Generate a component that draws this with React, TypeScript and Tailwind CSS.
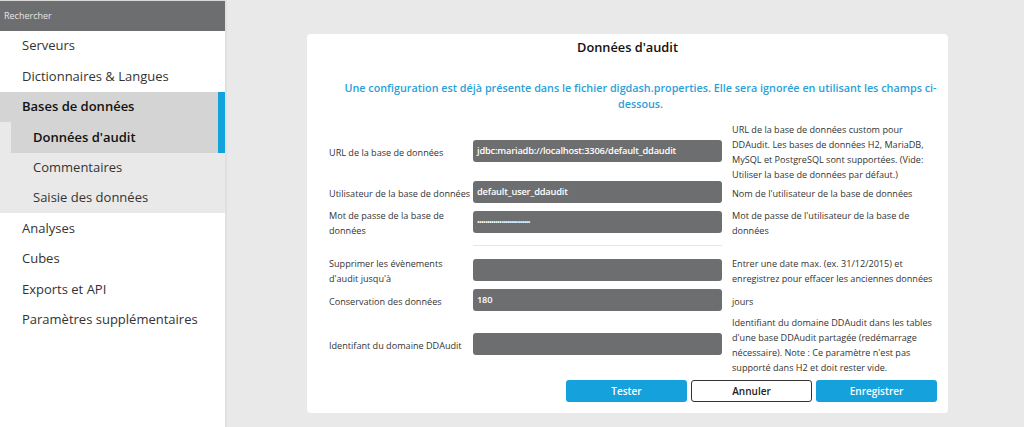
import React from "react";

const font = { fontFamily: '"Open Sans", "Noto Sans", sans-serif' };

function NavItem({ label }: { label: string }) {
  return <div className="flex h-[30.4px] items-center pl-[22px] text-[13px] text-[#333]">{label}</div>;
}

function Lines({ lines }: { lines: string[] }) {
  return (
    <>
      {lines.map((l, i) => (
        <div key={i} className="whitespace-nowrap">
          {l}
        </div>
      ))}
    </>
  );
}

function Row({ h, label, value, help, mt = 0, password = false }: { h: number; label: string[]; value?: string; help: string[]; mt?: number; password?: boolean }) {
  return (
    <div className="flex items-center" style={{ height: h, marginTop: mt }}>
      <div className="w-[144px] shrink-0 pt-[2px] text-[9.1px] leading-[15px] text-[#333]">
        <Lines lines={label} />
      </div>
      <div className="flex h-[22px] w-[249px] shrink-0 items-center rounded-[3px] bg-[#6d6e70] px-[4px] text-[9.3px] font-semibold tracking-[-0.2px] text-white">
        {password ? <span className="text-[7px] leading-none tracking-[-0.6px]">••••••••••••••••••••••••••</span> : value}
      </div>
      <div className="ml-[10px] shrink-0 pt-[2px] text-[9.1px] leading-[15px] text-[#333]">
        <Lines lines={help} />
      </div>
    </div>
  );
}

export default function App() {
  return (
    <div className="flex h-[427px] w-[1024px] overflow-hidden" style={font}>
      <div className="w-[225px] shrink-0 bg-white">
        <div className="flex h-[31px] items-center border-t border-[#d9d9d9] bg-[#6d6e70] pl-[4px] text-[9px] text-[#e6e6e6]">Rechercher</div>
        <NavItem label="Serveurs" />
        <NavItem label="Dictionnaires & Langues" />
        <div className="flex h-[30.4px] items-stretch">
          <div className="flex flex-1 items-center bg-[#d4d4d4] pl-[22px] text-[13px] font-semibold text-[#111]">Bases de données</div>
          <div className="w-[7px] bg-[#12a3dd]" />
        </div>
        <div className="bg-[#e9e9e9]">
          <div className="flex h-[30.4px] items-stretch">
            <div className="ml-[11px] flex flex-1 items-center bg-[#d4d4d4] pl-[22px] text-[13px] font-semibold text-[#111]">Données d'audit</div>
            <div className="w-[7px] bg-[#12a3dd]" />
          </div>
          <div className="flex h-[30.4px] items-center pl-[33px] text-[13px] text-[#333]">Commentaires</div>
          <div className="flex h-[30.4px] items-center pl-[33px] text-[13px] text-[#333]">Saisie des données</div>
        </div>
        <NavItem label="Analyses" />
        <NavItem label="Cubes" />
        <NavItem label="Exports et API" />
        <NavItem label="Paramètres supplémentaires" />
      </div>
      <div className="flex-1 border-l-2 border-[#e0e0e0] bg-[#e9e9e9] pt-[34px]">
        <div className="ml-[80px] flex h-[379px] w-[641px] flex-col rounded-[4px] bg-white">
          <div className="pt-[5px] text-center text-[12.8px] font-semibold leading-[17px] text-[#111]">Données d'audit</div>
          <div className="mt-[24px] pl-[26px] text-center text-[10.8px] font-semibold leading-[16px] text-[#2a9fd8]">
            <div className="whitespace-nowrap">Une configuration est déjà présente dans le fichier digdash.properties. Elle sera ignorée en utilisant les champs ci-</div>
            <div>dessous.</div>
          </div>
          <div className="ml-[22px] mt-[9px]">
            <Row
              h={60}
              label={["URL de la base de données"]}
              value="jdbc:mariadb://localhost:3306/default_ddaudit"
              help={[
                "URL de la base de données custom pour",
                "DDAudit. Les bases de données H2, MariaDB,",
                "MySQL et PostgreSQL sont supportées. (Vide:",
                "Utiliser la base de données par défaut.)",
              ]}
            />
            <Row h={22} label={["Utilisateur de la base de données"]} value="default_user_ddaudit" help={["Nom de l'utilisateur de la base de données"]} />
            <Row
              h={30}
              mt={4}
              label={["Mot de passe de la base de", "données"]}
              password
              help={["Mot de passe de l'utilisateur de la base de", "données"]}
            />
            <div className="ml-[144px] mt-[8px] h-px w-[249px] bg-[#e6e6e6]" />
            <Row
              h={30}
              mt={9}
              label={["Supprimer les évènements", "d'audit jusqu'à"]}
              value=""
              help={["Entrer une date max. (ex. 31/12/2015) et", "enregistrez pour effacer les anciennes données"]}
            />
            <Row h={22} mt={4} label={["Conservation des données"]} value="180" help={["jours"]} />
            <Row
              h={60}
              mt={3}
              label={["Identifant du domaine DDAudit"]}
              value=""
              help={[
                "Identifiant du domaine DDAudit dans les tables",
                "d'une base DDAudit partagée (redémarrage",
                "nécessaire). Note : Ce paramètre n'est pas",
                "supporté dans H2 et doit rester vide.",
              ]}
            />
          </div>
          <div className="mr-[11px] mt-[6px] flex justify-end gap-[4px] text-[10px] font-semibold">
            <button className="h-[22px] w-[121px] rounded-[3px] bg-[#14a1dc] text-white">Tester</button>
            <button className="h-[22px] w-[121px] rounded-[3px] border border-[#333] bg-white text-[#222]">Annuler</button>
            <button className="h-[22px] w-[121px] rounded-[3px] bg-[#14a1dc] text-white">Enregistrer</button>
          </div>
        </div>
      </div>
    </div>
  );
}
